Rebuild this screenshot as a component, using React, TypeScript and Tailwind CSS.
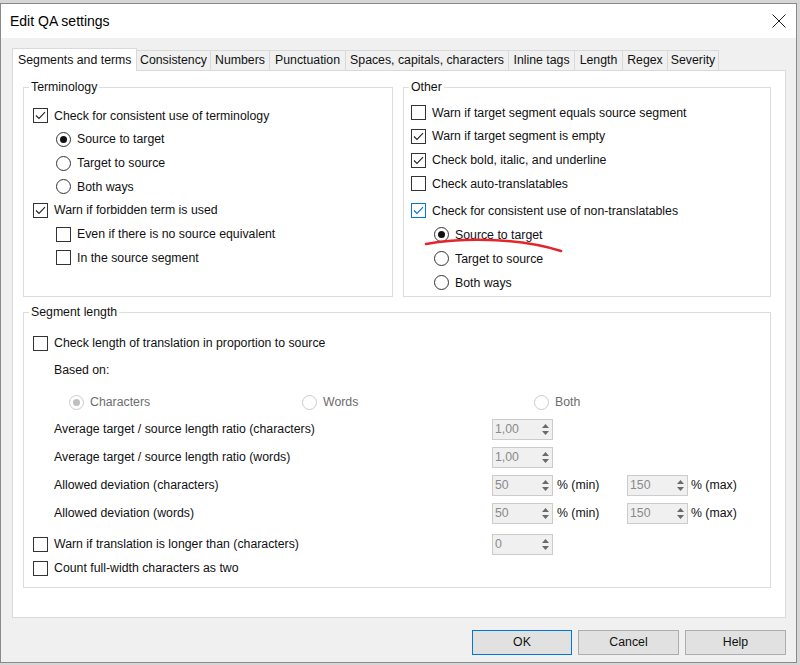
import React from 'react';

const font = "font-['Liberation_Sans',Arial,sans-serif]";

const Check = ({ checked = false, blue = false }: { checked?: boolean; blue?: boolean }) => (
  <span
    className={`w-[15px] h-[15px] shrink-0 border bg-white flex items-center justify-center ${
      blue ? 'border-[#0078d7]' : 'border-[#333333]'
    }`}
  >
    {checked && (
      <svg width="11" height="9" viewBox="0 0 11 9">
        <path d="M1 4.5 L4 7.5 L10 1.2" fill="none" stroke={blue ? '#0078d7' : '#222222'} strokeWidth="1.1" />
      </svg>
    )}
  </span>
);

const Radio = ({ checked = false, disabled = false }: { checked?: boolean; disabled?: boolean }) => (
  <span
    className={`w-[15px] h-[15px] shrink-0 rounded-full border flex items-center justify-center ${
      disabled ? 'border-[#cccccc] bg-white' : 'border-[#333333] bg-white'
    }`}
  >
    {checked && (
      <span className={`w-[7px] h-[7px] rounded-full ${disabled ? 'bg-[#bfbfbf]' : 'bg-[#111111]'}`} />
    )}
  </span>
);

const Spinner = ({ value }: { value: string }) => (
  <div className="w-[61px] h-[21px] border border-[#cccccc] bg-[#f0f0f0] flex">
    <span className="flex-1 pl-[2px] text-[#8a8a8a] leading-[19px]">{value}</span>
    <span className="w-[13px] flex flex-col items-center justify-center gap-[3px]">
      <svg width="7" height="4" viewBox="0 0 7 4">
        <path d="M0 4 L3.5 0 L7 4 Z" fill="#6a6a6a" />
      </svg>
      <svg width="7" height="4" viewBox="0 0 7 4">
        <path d="M0 0 L3.5 4 L7 0 Z" fill="#6a6a6a" />
      </svg>
    </span>
  </div>
);

const Group = ({ title, className, children }: { title: string; className: string; children: React.ReactNode }) => (
  <div className={`relative border border-[#dcdcdc] ${className}`}>
    <span className="absolute -top-[9px] left-[5px] bg-white px-[2px] leading-[16px]">{title}</span>
    {children}
  </div>
);

const tabs: [string, string][] = [
  ['Consistency', 'w-[74px]'],
  ['Numbers', 'w-[59px]'],
  ['Punctuation', 'w-[76px]'],
  ['Spaces, capitals, characters', 'w-[163px]'],
  ['Inline tags', 'w-[66px]'],
  ['Length', 'w-[48px]'],
  ['Regex', 'w-[45px]'],
  ['Severity', 'w-[51px]'],
];

export default function App() {
  return (
    <div className={`w-[800px] h-[665px] bg-[#d6d6d6] pt-[3px] ${font} text-[12.3px] text-[#111111]`}>
      <div className="w-[797px] h-[660px] border border-[#8a8a8a] flex flex-col">
        {/* title bar */}
        <div className="h-[34px] bg-white flex items-center justify-between pl-[9px] pr-[10px] shrink-0">
          <span className="text-[14px] text-black">Edit QA settings</span>
          <svg width="14" height="14" viewBox="0 0 14 14">
            <path d="M0.5 0.5 L13.5 13.5 M13.5 0.5 L0.5 13.5" stroke="#222222" strokeWidth="1" />
          </svg>
        </div>

        <div className="flex-1 bg-[#f0f0f0] pt-[10px] pl-[11px] flex flex-col">
          {/* tabs */}
          <div className="h-[22px] flex items-end">
            <div className="relative z-10 w-[125px] h-[23px] -mb-px bg-white border border-b-0 border-[#d9d9d9] pl-[5px] flex items-center">
              Segments and terms
            </div>
            {tabs.map(([t, w]) => (
              <div
                key={t}
                className={`${w} h-[20px] border border-l-0 border-b-0 border-[#d9d9d9] bg-[#f0f0f0] flex items-center justify-center whitespace-nowrap`}
              >
                {t}
              </div>
            ))}
          </div>

          {/* panel */}
          <div className="w-[774px] h-[548px] bg-white border border-[#d9d9d9] pt-[16px] pl-[10px]">
            <div className="flex gap-[10px]">
              <Group title="Terminology" className="w-[370px] h-[210px] pt-[16px] pl-[9px]">
                <div className="h-[23.67px] flex items-center gap-[6px]">
                  <Check checked />
                  <span>Check for consistent use of terminology</span>
                </div>
                <div className="h-[23.67px] flex items-center gap-[6px] pl-[23px]">
                  <Radio checked />
                  <span>Source to target</span>
                </div>
                <div className="h-[23.67px] flex items-center gap-[6px] pl-[23px]">
                  <Radio />
                  <span>Target to source</span>
                </div>
                <div className="h-[23.67px] flex items-center gap-[6px] pl-[23px]">
                  <Radio />
                  <span>Both ways</span>
                </div>
                <div className="h-[23.67px] flex items-center gap-[6px]">
                  <Check checked />
                  <span>Warn if forbidden term is used</span>
                </div>
                <div className="h-[23.67px] flex items-center gap-[6px] pl-[23px]">
                  <Check />
                  <span>Even if there is no source equivalent</span>
                </div>
                <div className="h-[23.67px] flex items-center gap-[6px] pl-[23px]">
                  <Check />
                  <span>In the source segment</span>
                </div>
              </Group>

              <Group title="Other" className="w-[368px] h-[210px] pt-[13px] pl-[7px]">
                <div className="h-[23.67px] flex items-center gap-[6px]">
                  <Check />
                  <span>Warn if target segment equals source segment</span>
                </div>
                <div className="h-[23.67px] flex items-center gap-[6px]">
                  <Check checked />
                  <span>Warn if target segment is empty</span>
                </div>
                <div className="h-[23.67px] flex items-center gap-[6px]">
                  <Check checked />
                  <span>Check bold, italic, and underline</span>
                </div>
                <div className="h-[23.67px] flex items-center gap-[6px]">
                  <Check />
                  <span>Check auto-translatables</span>
                </div>
                <div className="mt-[3.3px] h-[24px] flex items-center gap-[6px]">
                  <Check checked blue />
                  <span>Check for consistent use of non-translatables</span>
                </div>
                <div className="h-[24px] flex items-center gap-[6px] pl-[23px]">
                  <Radio checked />
                  <span>Source to target</span>
                </div>
                <div className="h-[24px] flex items-center gap-[6px] pl-[23px]">
                  <Radio />
                  <span>Target to source</span>
                </div>
                <div className="h-[24px] flex items-center gap-[6px] pl-[23px]">
                  <Radio />
                  <span>Both ways</span>
                </div>
                {/* hand-drawn red annotation */}
                <svg className="absolute left-0 top-0 pointer-events-none" width="368" height="210" viewBox="403 87 368 210">
                  <path d="M425 243 C 460 237, 515 236, 560 250" fill="none" stroke="#e3262b" strokeWidth="2.6" strokeLinecap="round" />
                </svg>
              </Group>
            </div>

            <Group title="Segment length" className="mt-[15px] w-[748px] h-[276px] pt-[18px]">
              <div className="h-[24px] flex items-center gap-[6px] pl-[9px]">
                <Check />
                <span>Check length of translation in proportion to source</span>
              </div>
              <div className="mt-[3px] h-[24px] flex items-center pl-[30px]">Based on:</div>
              <div className="mt-[8px] h-[24px] grid grid-cols-[233px_232px_1fr] pl-[45px] text-[#6d6d6d]">
                <div className="flex items-center gap-[6px]">
                  <Radio checked disabled />
                  <span>Characters</span>
                </div>
                <div className="flex items-center gap-[6px]">
                  <Radio disabled />
                  <span>Words</span>
                </div>
                <div className="flex items-center gap-[6px]">
                  <Radio disabled />
                  <span>Both</span>
                </div>
              </div>
              <div className="mt-[1px] pl-[30px]">
                <div className="h-[28px] grid grid-cols-[438px_61px] items-center">
                  <span>Average target / source length ratio (characters)</span>
                  <Spinner value="1,00" />
                </div>
                <div className="h-[28px] grid grid-cols-[438px_61px] items-center">
                  <span>Average target / source length ratio (words)</span>
                  <Spinner value="1,00" />
                </div>
                <div className="h-[28px] grid grid-cols-[438px_61px_74px_61px_1fr] items-center">
                  <span>Allowed deviation (characters)</span>
                  <Spinner value="50" />
                  <span className="pl-[4px]">% (min)</span>
                  <Spinner value="150" />
                  <span className="pl-[3px]">% (max)</span>
                </div>
                <div className="h-[28px] grid grid-cols-[438px_61px_74px_61px_1fr] items-center">
                  <span>Allowed deviation (words)</span>
                  <Spinner value="50" />
                  <span className="pl-[4px]">% (min)</span>
                  <Spinner value="150" />
                  <span className="pl-[3px]">% (max)</span>
                </div>
              </div>
              <div className="mt-[5px] h-[24px] grid grid-cols-[459px_61px] items-center pl-[9px]">
                <div className="flex items-center gap-[6px]">
                  <Check />
                  <span>Warn if translation is longer than (characters)</span>
                </div>
                <Spinner value="0" />
              </div>
              <div className="h-[24px] flex items-center gap-[6px] pl-[9px]">
                <Check />
                <span>Count full-width characters as two</span>
              </div>
            </Group>
          </div>

          {/* buttons */}
          <div className="mt-[12px] w-[774px] flex justify-end gap-[6px]">
            <button className="w-[100px] h-[25px] bg-[#e1e1e1] border border-[#0078d7]">OK</button>
            <button className="w-[101px] h-[25px] bg-[#e1e1e1] border border-[#adadad]">Cancel</button>
            <button className="w-[101px] h-[25px] bg-[#e1e1e1] border border-[#adadad]">Help</button>
          </div>
        </div>
      </div>
    </div>
  );
}
